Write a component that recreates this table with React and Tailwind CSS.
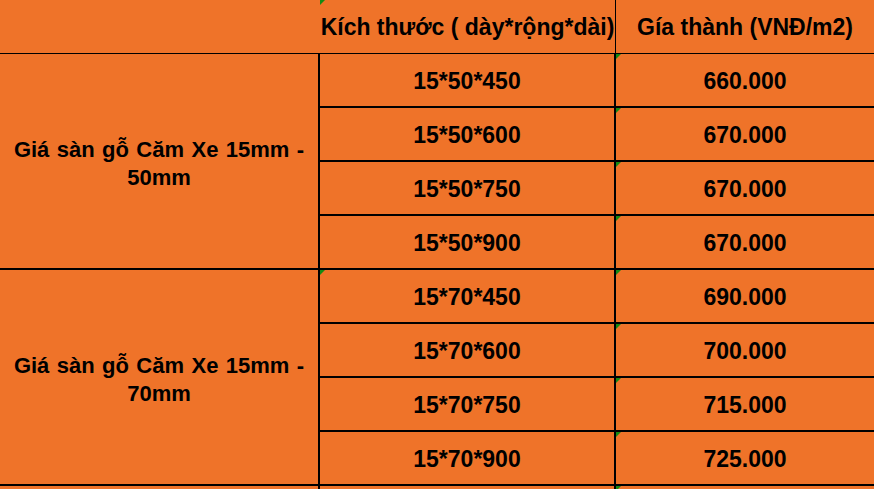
const groups = [
  {
    label: "Giá sàn gỗ Căm Xe 15mm - 50mm",
    rows: [
      ["15*50*450", "660.000"],
      ["15*50*600", "670.000"],
      ["15*50*750", "670.000"],
      ["15*50*900", "670.000"],
    ],
  },
  {
    label: "Giá sàn gỗ Căm Xe 15mm - 70mm",
    rows: [
      ["15*70*450", "690.000"],
      ["15*70*600", "700.000"],
      ["15*70*750", "715.000"],
      ["15*70*900", "725.000"],
    ],
    markFirst: true,
  },
];

// little green Excel-style corner mark
const Mark = () => (
  <span className="absolute left-0 top-0 w-0 h-0 border-t-[5px] border-r-[5px] border-t-[#148a14] border-r-transparent" />
);

export default function App() {
  return (
    <div
      className="min-h-screen w-[874px] overflow-hidden bg-[#ef7329] text-black font-bold text-[23px]"
      style={{ fontFamily: '"Liberation Sans", Arial, sans-serif' }}
    >
      {/* HEADER */}
      <div className="flex h-[54px] border-b border-black">
        <div className="w-[320px] shrink-0" />
        <div className="relative w-[296px] shrink-0 border-r border-black flex items-center justify-center whitespace-nowrap pt-[2px]">
          <Mark />
          Kích thước ( dày*rộng*dài)
        </div>
        <div className="flex-1 flex items-center justify-center whitespace-nowrap pt-[2px]">
          Gía thành (VNĐ/m2)
        </div>
      </div>

      {/* BODY */}
      {groups.map((g, gi) => (
        <div key={gi} className="flex">
          <div className="w-[320px] shrink-0 border-r-2 border-b-2 border-black flex items-center justify-center text-center px-2 text-[22px] leading-[28px] pt-[5px] [word-spacing:1.3px]">
            {g.label}
          </div>
          <div className="flex-1 flex flex-col">
            {g.rows.map(([size, price], ri) => (
              <div key={ri} className="flex h-[54px] border-b-2 border-black">
                <div className="relative w-[296px] shrink-0 border-r-2 border-black flex items-center justify-center pt-[2px]">
                  {g.markFirst && ri === 0 && <Mark />}
                  {size}
                </div>
                <div className="relative flex-1 flex items-center justify-center pt-[2px]">
                  <Mark />
                  {price}
                </div>
              </div>
            ))}
          </div>
        </div>
      ))}

      <div className="flex h-[20px]">
        <div className="w-[320px] shrink-0 border-r-2 border-black" />
        <div className="relative w-[296px] shrink-0 border-r-2 border-black" />
        <div className="relative flex-1">
          <Mark />
        </div>
      </div>
    </div>
  );
}
